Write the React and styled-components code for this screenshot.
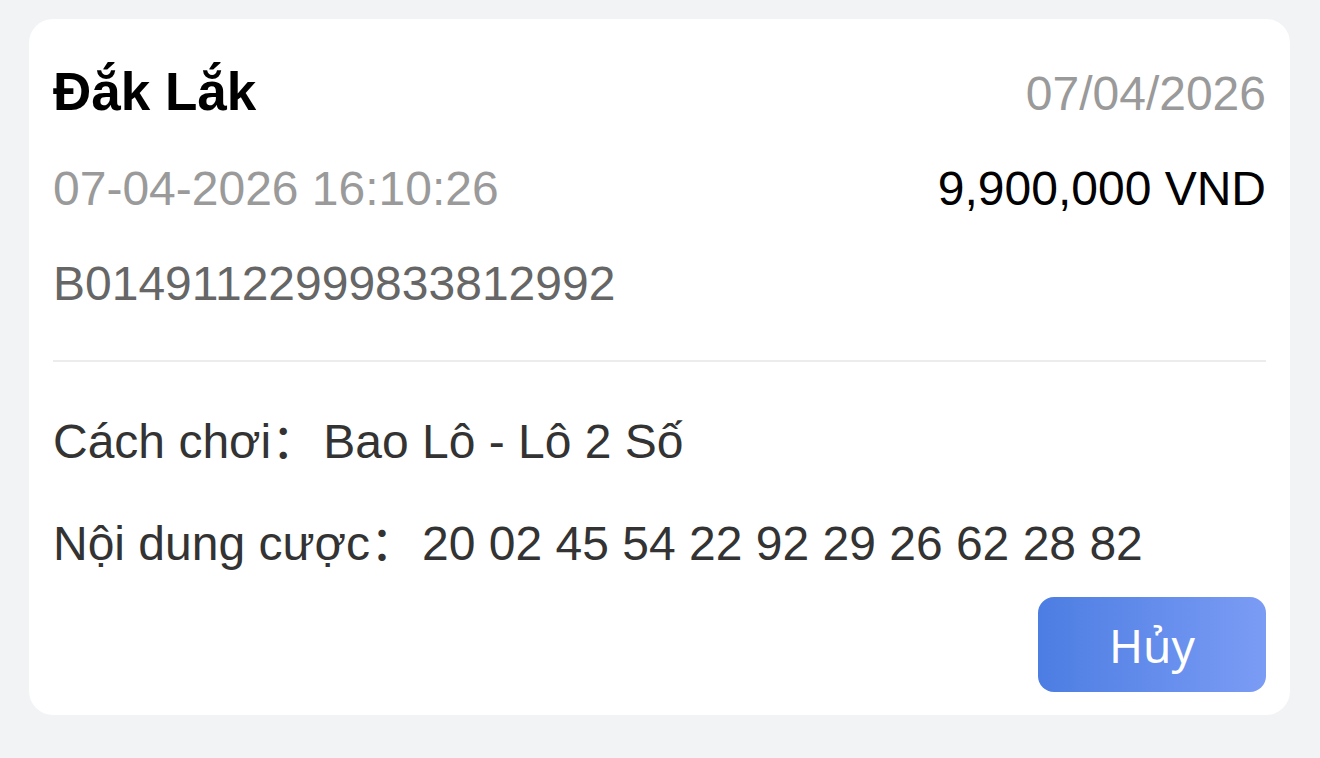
import React from "react";
import styled, { createGlobalStyle } from "styled-components";

const Global = createGlobalStyle`
  html, body { margin: 0; padding: 0; }
  body {
    background: #f2f3f5;
    font-family: "Liberation Sans", Arial, "Noto Sans CJK SC", sans-serif;
  }
`;

const Page = styled.div`
  padding: 19px 30px 40px 29px;
`;

const Card = styled.div`
  background: #ffffff;
  border-radius: 24px;
  padding: 45px 24px 23px 24px;
  display: flex;
  flex-direction: column;
`;

const Row = styled.div`
  display: flex;
  justify-content: space-between;
  align-items: baseline;
  margin-top: ${(p) => p.$mt || 0}px;
  height: 56px;
  line-height: 56px;
`;

const Title = styled.div`
  font-size: 53px;
  font-weight: 700;
  color: #000;
`;

const Text = styled.div`
  font-size: 48px;
  color: ${(p) => p.$color || "#333"};
  white-space: nowrap;
`;

const Divider = styled.div`
  height: 2px;
  background: #ececec;
  margin-top: 48px;
`;

const InfoRow = styled.div`
  display: flex;
  align-items: baseline;
  margin-top: ${(p) => p.$mt || 0}px;
  height: 56px;
  line-height: 56px;
  font-size: 48px;
  color: #333;
  white-space: nowrap;
`;

const Label = styled.span``;

const Colon = styled.span`
  font-family: "Noto Sans CJK SC", sans-serif;
`;

const Value = styled.span`
  margin-left: ${(p) => p.$ml || 0}px;
`;

const Actions = styled.div`
  display: flex;
  justify-content: flex-end;
  margin-top: 30px;
`;

const Button = styled.button`
  width: 228px;
  height: 95px;
  border: none;
  border-radius: 16px;
  background: linear-gradient(90deg, #4c7de2 0%, #7b9cf5 100%);
  color: #fff;
  font-family: "Noto Sans", "Open Sans", sans-serif;
  font-size: 46px;
  padding: 0;
  cursor: pointer;
`;

export default function App() {
  return (
    <>
      <Global />
      <Page>
        <Card>
          <Row>
            <Title>Đắk Lắk</Title>
            <Text $color="#9a9a9a">07/04/2026</Text>
          </Row>
          <Row $mt={41}>
            <Text $color="#9a9a9a">07-04-2026 16:10:26</Text>
            <Text $color="#000">9,900,000 VND</Text>
          </Row>
          <Row $mt={39}>
            <Text $color="#666">B01491122999833812992</Text>
          </Row>
          <Divider />
          <InfoRow $mt={47}>
            <Label>Cách chơi</Label>
            <Colon>：</Colon>
            <Value $ml={4}>Bao Lô - Lô 2 Số</Value>
          </InfoRow>
          <InfoRow $mt={46}>
            <Label>Nội dung cược</Label>
            <Colon>：</Colon>
            <Value $ml={4}>20 02 45 54 22 92 29 26 62 28 82</Value>
          </InfoRow>
          <Actions>
            <Button>Hủy</Button>
          </Actions>
        </Card>
      </Page>
    </>
  );
}
